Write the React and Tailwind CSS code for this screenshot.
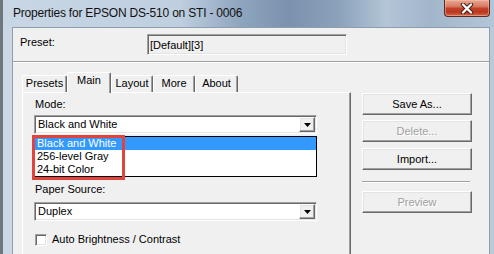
import React from 'react';

const raised =
  'border border-t-white border-l-white border-r-[#696969] border-b-[#696969] shadow-[inset_-1px_-1px_0_#a0a0a0,inset_1px_1px_0_#e3e3e3]';
const sunken =
  'border border-t-[#a0a0a0] border-l-[#a0a0a0] border-r-white border-b-white shadow-[inset_1px_1px_0_#696969,inset_-1px_-1px_0_#e3e3e3]';

const Btn = ({ children, disabled }) => (
  <div
    className={`h-[22px] w-[110px] flex items-center justify-center bg-[#f0f0f0] leading-[13px] ${raised} ${
      disabled ? 'text-[#a0a0a0] [text-shadow:1px_1px_0_#fff]' : 'text-black'
    }`}
  >
    {children}
  </div>
);

const Combo = ({ value }) => (
  <div className={`h-[19px] w-[283px] flex bg-white p-[1px] ${sunken}`}>
    <div className="flex-1 flex items-center pl-[2px] leading-[13px]">{value}</div>
    <div className={`w-[16px] h-full flex items-center justify-center bg-[#f0f0f0] ${raised}`}>
      <svg width="7" height="4" viewBox="0 0 7 4">
        <path d="M0 0H7L3.5 4Z" fill="#000" />
      </svg>
    </div>
  </div>
);

const tabs = [
  { label: 'Presets', w: 'w-[45px]' },
  { label: 'Main', w: 'w-[44px]', active: true },
  { label: 'Layout', w: 'w-[42px]' },
  { label: 'More', w: 'w-[42px]' },
  { label: 'About', w: 'w-[43px]' },
];

const modes = ['Black and White', '256-level Gray', '24-bit Color'];

export default function App() {
  return (
    <div className="w-[494px] h-[254px] overflow-hidden flex flex-col border-l-[3px] border-[#6e7780] font-['Liberation_Sans',Arial,sans-serif] text-[11px] text-black bg-[linear-gradient(to_right,#c8d6e5_0%,#bfcfe0_36%,#8fa6bf_48%,#7a92ad_58%,#8aa1ba_68%,#b3c5d7_78%,#a2b6cb_87%,#b3c5d8_100%)]">
      {/* title bar */}
      <div className="h-[27px] flex shrink-0">
        <div className="ml-[10px] mt-[6px] text-[12px] leading-[14px] tracking-[-0.2px] text-[#111]">
          Properties for EPSON DS-510 on STI - 0006
        </div>
        <div className="ml-auto mr-[4px] w-[46px] h-[17px] rounded-b-[4px] border border-t-0 border-[#5b2a22] shadow-[inset_0_0_0_1px_rgba(255,200,180,0.45)] bg-[linear-gradient(to_bottom,#e9a996_0%,#d97a63_40%,#c3412a_52%,#b8371f_75%,#d46a4c_100%)] flex items-center justify-center">
          <svg width="14" height="11" viewBox="0 0 14 11">
            <path d="M3 1.5L11 9.5M11 1.5L3 9.5" stroke="#4a1d16" strokeWidth="4.4" strokeLinecap="round" />
            <path d="M3 1.5L11 9.5M11 1.5L3 9.5" stroke="#fff" strokeWidth="2.4" strokeLinecap="round" />
          </svg>
        </div>
      </div>

      <div className="flex-1 flex">
        <div className="w-[9px] bg-[#cad7e4]" />

        {/* client area */}
        <div className="w-[478px] bg-[#f0f0f0] border-l border-t border-r border-[#8f9cab] flex flex-col">
          <div className="h-[33px] flex shrink-0">
            <div className="w-[134px] pl-[7px] pt-[8px] leading-[13px]">Preset:</div>
            <div className={`mt-[6px] w-[200px] h-[21px] pl-[2px] pt-[4px] leading-[13px] bg-[#f0f0f0] ${sunken}`}>
              [Default][3]
            </div>
          </div>
          <div className="h-[2px] border-t border-[#a0a0a0] border-b border-b-white shrink-0" />

          <div className="flex mt-[9px]">
            {/* tab control */}
            <div className="ml-[9px] w-[329px] flex flex-col">
              <div className="h-[20px] flex items-end relative z-10">
                {tabs.map((t) =>
                  t.active ? (
                    <div
                      key={t.label}
                      className={`${t.w} h-[21px] -mb-[1px] pt-[1px] text-center leading-[13px] bg-[#f0f0f0] rounded-t-[2px] border-t border-l border-r border-t-white border-l-white border-r-[#696969] shadow-[inset_-1px_0_0_#a0a0a0]`}
                    >
                      {t.label}
                    </div>
                  ) : (
                    <div
                      key={t.label}
                      className={`${t.w} h-[17px] pt-[1px] text-center leading-[13px] rounded-t-[2px] border-t border-l border-r border-t-white border-l-white border-r-[#696969] shadow-[inset_-1px_0_0_#a0a0a0]`}
                    >
                      {t.label}
                    </div>
                  )
                )}
              </div>

              <div className="h-[170px] pl-[11px] flex flex-col border-t border-l border-r border-t-white border-l-white border-r-[#696969] shadow-[inset_-1px_0_0_#a0a0a0]">
                <div className="mt-[5px] ml-[1px] leading-[13px]">Mode:</div>
                <div className="mt-[4px]">
                  <Combo value="Black and White" />
                </div>
                <div className="relative mt-[2px] w-[283px]">
                  <div className="border border-black bg-white">
                    {modes.map((m, i) => (
                      <div
                        key={m}
                        className={`h-[13px] pl-[2px] leading-[13px] ${i === 0 ? 'bg-[#3399ff] text-white' : ''}`}
                      >
                        {m}
                      </div>
                    ))}
                  </div>
                  <div className="absolute left-[-2px] top-[-1px] w-[93px] h-[45px] border-[3px] border-[#e2433c]" />
                </div>
                <div className="mt-[6px] ml-[1px] leading-[13px]">Paper Source:</div>
                <div className="mt-[6px]">
                  <Combo value="Duplex" />
                </div>
                <div className="mt-[12px] h-[13px] flex items-center">
                  <div className={`ml-[1px] w-[12px] h-[12px] bg-white ${sunken}`} />
                  <div className="ml-[5px] leading-[13px]">Auto Brightness / Contrast</div>
                </div>
              </div>
            </div>

            {/* buttons */}
            <div className="ml-[11px] pt-[21px] w-[110px] flex flex-col">
              <Btn>Save As...</Btn>
              <div className="mt-[5px]">
                <Btn disabled>Delete...</Btn>
              </div>
              <div className="mt-[6px]">
                <Btn>Import...</Btn>
              </div>
              <div className="mt-[11px] w-[108px] h-[2px] border-t border-[#a0a0a0] border-b border-b-white" />
              <div className="mt-[8px]">
                <Btn disabled>Preview</Btn>
              </div>
            </div>
          </div>
        </div>

        <div className="flex-1 bg-[#b9cadb]" />
      </div>
    </div>
  );
}
